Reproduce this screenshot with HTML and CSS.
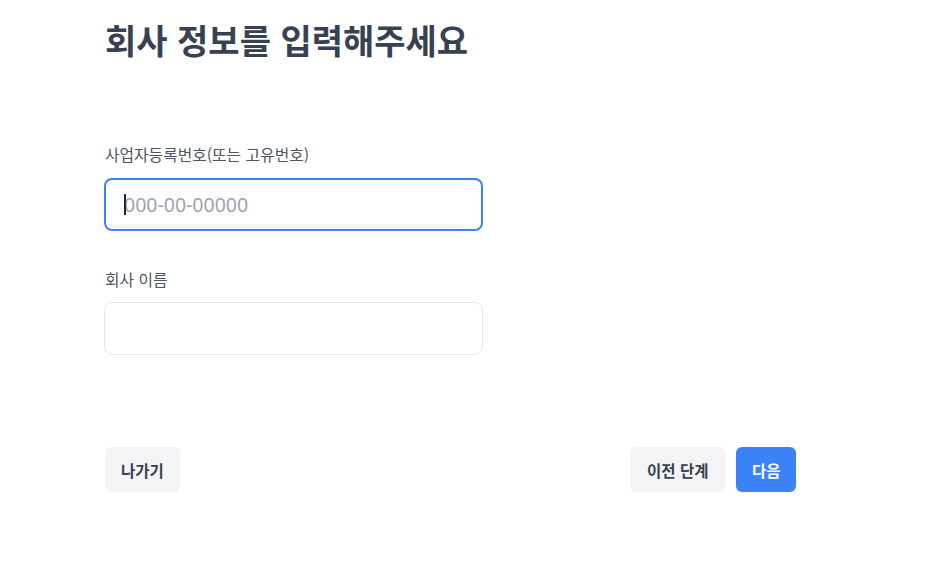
FILE: index.html
```html
<!DOCTYPE html>
<html lang="ko">
<head>
<meta charset="utf-8">
<title>회사 정보</title>
<link rel="stylesheet" href="styles.css">
</head>
<body>
<main class="page">
  <h1 class="title">회사 정보를 입력해주세요</h1>
  <form class="form">
    <div class="field">
      <label class="label" for="bizno">사업자등록번호(또는 고유번호)</label>
      <div class="input-wrap">
        <input id="bizno" class="input input-focused" type="text" placeholder="000-00-00000">
        <span class="caret"></span>
      </div>
    </div>
    <div class="field field-second">
      <label class="label" for="cname">회사 이름</label>
      <div class="input-wrap">
        <input id="cname" class="input" type="text">
      </div>
    </div>
  </form>
  <div class="actions">
    <button class="btn btn-gray btn-exit" type="button">나가기</button>
    <div class="actions-right">
      <button class="btn btn-gray btn-prev" type="button">이전 단계</button>
      <button class="btn btn-blue btn-next" type="button">다음</button>
    </div>
  </div>
</main>
</body>
</html>
```
FILE: styles.css
```css
html, body {
  margin: 0;
  padding: 0;
  background: #ffffff;
}
body {
  font-family: "Noto Sans CJK KR", "Noto Sans", sans-serif;
  color: #374151;
}
.page {
  width: 692px;
  padding: 20px 0 0 104px;
  box-sizing: content-box;
}
.title {
  margin: 0;
  padding-left: 1px;
  font-size: 34px;
  line-height: 40px;
  font-weight: 700;
  color: #374151;
}
.form {
  margin-top: 84px;
  width: 379px;
}
.field {
  display: flex;
  flex-direction: column;
  gap: 12px;
}
.field-second {
  margin-top: 38px;
  gap: 11px;
}
.label {
  padding-left: 1px;
  font-size: 15.8px;
  line-height: 22px;
  color: #4b5563;
  font-weight: 400;
}
.input-wrap {
  position: relative;
}
.input {
  display: block;
  width: 100%;
  height: 53px;
  box-sizing: border-box;
  border: 1px solid #e5e7eb;
  border-radius: 8px;
  padding: 0 19px;
  font-family: "Noto Sans", "Noto Sans CJK KR", sans-serif;
  font-size: 19.5px;
  color: #111827;
  background: #fff;
  outline: none;
}
.input::placeholder {
  color: #9ca3af;
}
.input-focused {
  border: 2px solid #3b82f6;
  padding: 0 18px;
}
.caret {
  position: absolute;
  left: 20px;
  top: 16px;
  width: 1.5px;
  height: 21px;
  background: #1f2937;
}
.actions {
  margin-top: 92px;
  display: flex;
  justify-content: space-between;
  align-items: center;
}
.actions-right {
  display: flex;
  gap: 11px;
}
.btn {
  height: 45px;
  padding: 0 16px;
  border: none;
  border-radius: 6px;
  font-family: "Noto Sans CJK KR", "Noto Sans", sans-serif;
  font-size: 15.5px;
  font-weight: 600;
  cursor: pointer;
}
.btn-exit {
  margin-left: 1px;
}
.btn-prev {
  padding: 0 17px;
}
.btn-next {
  padding: 0 15.5px;
}
.btn-gray {
  background: #f3f4f6;
  color: #374151;
}
.btn-blue {
  background: #3b82f6;
  color: #ffffff;
}
```
